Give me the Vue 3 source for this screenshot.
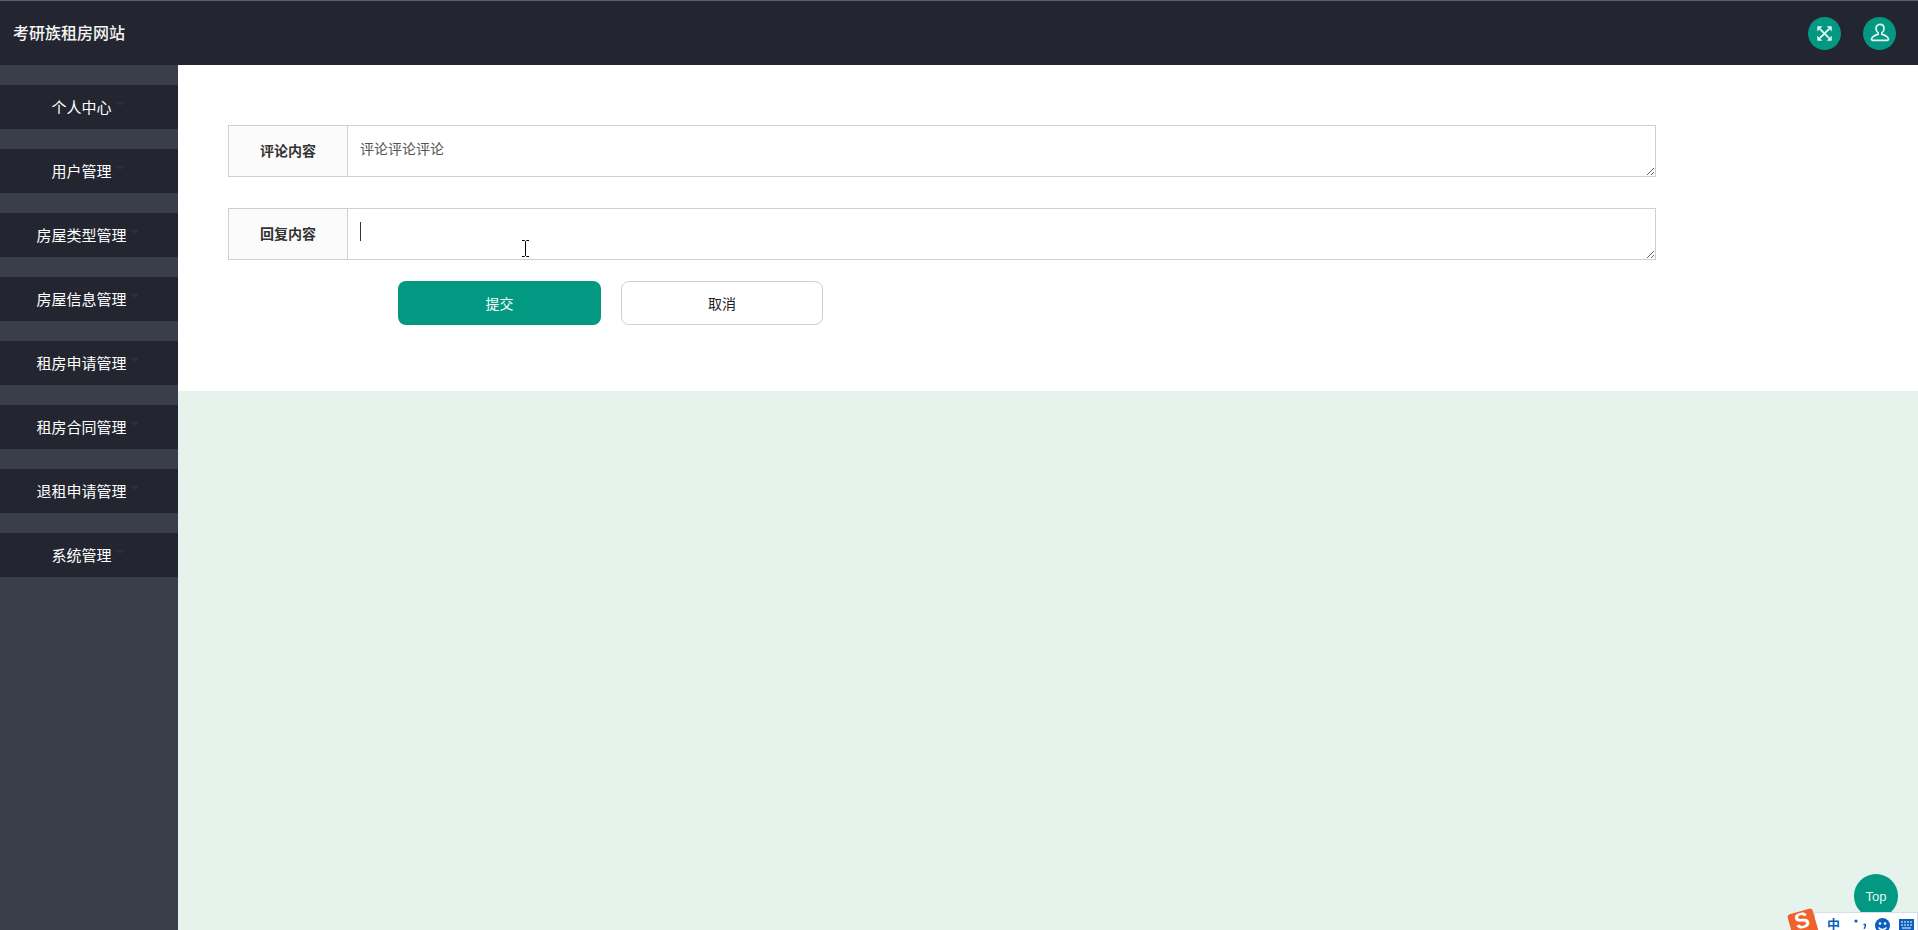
<script setup>
const menus = ['个人中心', '用户管理', '房屋类型管理', '房屋信息管理', '租房申请管理', '租房合同管理', '退租申请管理', '系统管理']
</script>

<template>
  <div class="page">
    <header class="topbar">
      <div class="brand">考研族租房网站</div>
      <div class="actions">
        <span class="round">
          <svg width="17" height="17" viewBox="0 0 20 20" fill="none">
            <path d="M4.500 4.500l11 11M15.500 4.500l-11 11" stroke="#e3f6f2" stroke-width="2.200" />
            <path d="M1.500 1.500h6l-6 6zM18.500 1.500v6l-6-6zM18.500 18.500h-6l6-6zM1.500 18.500v-6l6 6z" fill="#e3f6f2" />
          </svg>
        </span>
        <span class="round">
          <svg width="20" height="20" viewBox="0 0 22 22" fill="none" stroke="#e3f6f2" stroke-width="1.900">
            <path d="M11 1.500c-2.800 0-4.400 2.100-4.400 4.600 0 2.100.9 3.700 2.300 4.700v1.700C5.600 13.300 2.700 15 1.800 17.300c-.4 1 .1 1.700 1.100 1.700h16.200c1 0 1.500-.7 1.100-1.700-.9-2.300-3.800-4-7.100-4.800v-1.700c1.400-1 2.300-2.600 2.300-4.700 0-2.500-1.600-4.600-4.400-4.600z" />
          </svg>
        </span>
      </div>
    </header>
    <div class="body">
      <aside class="sidebar">
        <div v-for="m in menus" :key="m" class="menu-item">
          <span class="menu-label">{{ m }}<i class="caret"></i></span>
        </div>
      </aside>
      <main class="main">
        <form class="card" @submit.prevent>
          <div class="row">
            <label class="label">评论内容</label>
            <textarea class="field" readonly>评论评论评论</textarea>
          </div>
          <div class="row second">
            <label class="label">回复内容</label>
            <div class="field-wrap">
              <textarea class="field"></textarea>
              <i class="text-caret"></i>
              <svg class="ibeam" width="9" height="17" viewBox="0 0 9 17" fill="none" stroke="#000" stroke-width="1">
                <path d="M1 .5h2.500l1 1 1-1H8M4.500 1.500v14M1 16.500h2.500l1-1 1 1H8" />
              </svg>
            </div>
          </div>
          <div class="buttons">
            <button class="btn primary" type="button">提交</button>
            <button class="btn ghost" type="button">取消</button>
          </div>
        </form>
      </main>
    </div>
    <div class="top-btn">Top</div>
    <div class="ime">
      <div class="ime-bar">
        <span class="ime-zh">中</span>
        <svg class="ime-punc" width="12" height="11" viewBox="0 0 12 11">
          <circle cx="2" cy="3" r="1.600" fill="#0b5fc0" />
          <path d="M9.500 6.500h1.800v1.800l-1.200 2.500" fill="none" stroke="#0b5fc0" stroke-width="1.400" />
        </svg>
        <svg class="ime-smile" width="15" height="15" viewBox="0 0 15 15">
          <circle cx="7.500" cy="7.500" r="7.500" fill="#0b5fc0" />
          <circle cx="5" cy="5.500" r="1.300" fill="#fff" />
          <circle cx="10" cy="5.500" r="1.300" fill="#fff" />
          <path d="M3.500 9.500c2 2.500 6 2.500 8 0" stroke="#fff" stroke-width="1.400" fill="none" />
        </svg>
        <svg class="ime-keys" width="15" height="11" viewBox="0 0 15 11">
          <rect width="15" height="11" fill="#0b5fc0" />
          <path d="M2 3h2M5 3h2M8 3h2M11 3h2M2 6h2M5 6h2M8 6h2M11 6h2M3 9h9" stroke="#fff" stroke-width="1.100" />
        </svg>
      </div>
      <span class="ime-logo"><span class="ime-s">S</span></span>
    </div>
  </div>
</template>

<style scoped>
.page {
  position: relative;
  width: 1918px;
  height: 930px;
  overflow: hidden;
  background: #e6f2ec;
  font-family: "Liberation Sans", "Noto Sans CJK SC", sans-serif;
}
.topbar {
  box-sizing: border-box;
  height: 65px;
  background: #232630;
  border-top: 1px solid #5b5f68;
  display: flex;
  align-items: center;
  justify-content: space-between;
  padding: 0 22px 0 13px;
}
.brand {
  color: #f6f6f6;
  font-size: 16px;
  font-weight: 500;
  padding-bottom: 2px;
}
.actions {
  display: flex;
  gap: 22px;
}
.round {
  width: 33px;
  height: 33px;
  border-radius: 50%;
  background: #029882;
  display: flex;
  align-items: center;
  justify-content: center;
}
.body {
  display: flex;
  height: 865px;
}
.sidebar {
  box-sizing: border-box;
  width: 178px;
  flex: none;
  background: #3a3e4b;
  padding-top: 20px;
  display: flex;
  flex-direction: column;
  gap: 20px;
}
.menu-item {
  height: 44px;
  background: #232630;
  color: #fff;
  font-size: 15px;
  display: flex;
  align-items: center;
  justify-content: center;
  padding: 0 15px 2px 0;
  box-sizing: border-box;
}
.menu-label {
  position: relative;
}
.caret {
  position: absolute;
  right: -12px;
  top: 6px;
  width: 0;
  height: 0;
  border-left: 4px solid transparent;
  border-right: 4px solid transparent;
  border-top: 4px solid #2e313b;
}
.main {
  flex: 1;
  min-width: 0;
}
.card {
  box-sizing: border-box;
  height: 326px;
  background: #fff;
  padding: 60px 262px 0 50px;
}
.row {
  display: flex;
  height: 52px;
  box-sizing: border-box;
}
.second {
  margin-top: 31px;
}
.label {
  box-sizing: border-box;
  width: 120px;
  flex: none;
  display: flex;
  align-items: center;
  justify-content: center;
  background: #fbfbfb;
  border: 1px solid #cfcfcf;
  padding-bottom: 2px;
  color: #333;
  font-size: 14px;
  font-weight: 700;
}
.field-wrap {
  position: relative;
  flex: 1;
  display: flex;
  min-width: 0;
}
.field {
  flex: 1;
  box-sizing: border-box;
  height: 52px;
  min-width: 0;
  margin: 0;
  padding: 13px 12px 12px;
  border: 1px solid #cfcfcf;
  border-left: 0;
  border-radius: 0;
  outline: none;
  background: #fff;
  color: #555;
  font-family: "Liberation Sans", "Noto Sans CJK SC", sans-serif;
  font-size: 14px;
  line-height: 20px;
}
.text-caret {
  position: absolute;
  left: 12px;
  top: 14px;
  width: 1px;
  height: 19px;
  background: #333;
}
.ibeam {
  position: absolute;
  left: 173px;
  top: 32px;
}
.buttons {
  display: flex;
  gap: 20px;
  margin-top: 21px;
  padding-left: 170px;
}
.btn {
  box-sizing: border-box;
  width: 203px;
  height: 44px;
  border-radius: 8px;
  font-family: "Liberation Sans", "Noto Sans CJK SC", sans-serif;
  font-size: 14px;
  padding: 0;
}
.primary {
  background: #029882;
  border: 0;
  color: #fff;
}
.ghost {
  width: 202px;
  background: #fff;
  border: 1px solid #cfcfcf;
  color: #222;
}
.top-btn {
  position: absolute;
  left: 1854px;
  top: 874px;
  width: 44px;
  height: 44px;
  border-radius: 50%;
  background: #029882;
  color: #e6f7f3;
  font-size: 13px;
  display: flex;
  align-items: center;
  justify-content: center;
}
.ime {
  position: absolute;
  left: 1788px;
  top: 908px;
  width: 130px;
  height: 22px;
}
.ime-logo {
  position: absolute;
  left: 2px;
  top: 3px;
  width: 26px;
  height: 26px;
  border-radius: 3px;
  background: #f0622a;
  transform: rotate(-16deg);
  display: flex;
  justify-content: center;
}
.ime-s {
  color: #fff;
  font-weight: 700;
  font-size: 22px;
  line-height: 19px;
}
.ime-bar {
  position: absolute;
  left: 26px;
  top: 4px;
  right: 0;
  height: 19px;
  box-sizing: border-box;
  background: #fff;
  border: 1px solid #d6e0ea;
  border-bottom: 0;
  padding: 5px 0 0 12px;
  display: flex;
  align-items: flex-start;
  color: #0b5fc0;
}
.ime-zh {
  font-size: 13px;
  font-weight: 700;
  line-height: 13px;
}
.ime-punc {
  margin: 0 0 0 14px;
}
.ime-smile {
  margin-left: 9px;
}
.ime-keys {
  margin: 1px 0 0 9px;
}
</style>
